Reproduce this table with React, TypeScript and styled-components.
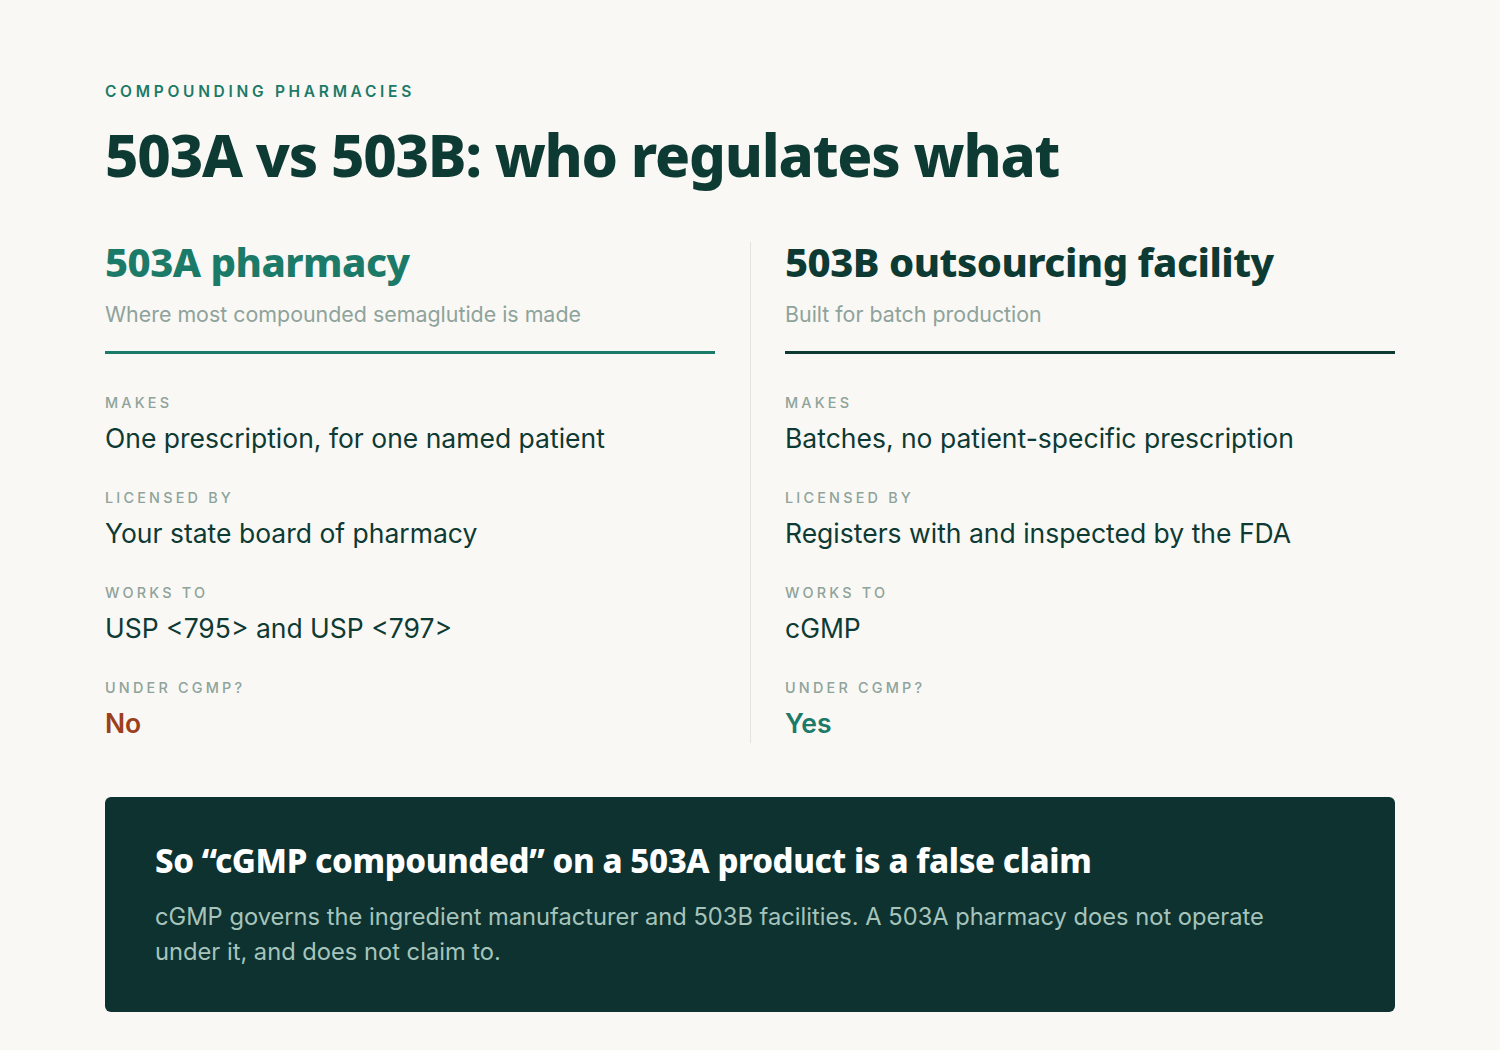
import React from 'react'
import styled, { createGlobalStyle } from 'styled-components'

const GlobalStyle = createGlobalStyle`
  html, body {
    margin: 0;
    padding: 0;
    background: #f9f8f4;
  }
  body {
    font-family: Inter, 'Noto Sans', sans-serif;
    color: #0e3a34;
  }
`

const Page = styled.main`
  padding: 82px 105px 38px;
`

const Eyebrow = styled.div`
  font-size: 15.5px;
  font-weight: 600;
  letter-spacing: 3.7px;
  color: #1c7a68;
  line-height: 20px;
`

const Title = styled.h1`
  margin: 17px 0 0;
  font-family: 'Noto Sans', sans-serif;
  font-size: 58px;
  font-weight: 800;
  letter-spacing: -1.2px;
  line-height: 72px;
  color: #0e3a34;
`

const Columns = styled.section`
  display: grid;
  grid-template-columns: 1fr 1fr;
  margin-top: 51px;
`

const Column = styled.div<{ $right?: boolean }>`
  padding: ${p => (p.$right ? '0 0 0 34px' : '0 35px 0 0')};
  border-left: ${p => (p.$right ? '1px solid #e3e3dc' : 'none')};
`

const ColTitle = styled.h2<{ $accent: string }>`
  margin: 0;
  font-family: 'Noto Sans', sans-serif;
  font-size: 40px;
  font-weight: 800;
  letter-spacing: -0.5px;
  line-height: 40px;
  color: ${p => p.$accent};
`

const Sub = styled.p`
  margin: 18px 0 0;
  font-size: 21.4px;
  line-height: 28px;
  color: #8ea39b;
`

const Rule = styled.div<{ $accent: string }>`
  height: 3px;
  margin-top: 23px;
  background: ${p => p.$accent};
`

const Rows = styled.dl`
  margin: 39px 0 0;
  display: flex;
  flex-direction: column;
  gap: 30px;
`

const Row = styled.div`
  display: flex;
  flex-direction: column;
  gap: 5px;
`

const Label = styled.dt`
  font-size: 14.4px;
  font-weight: 500;
  letter-spacing: 3.2px;
  line-height: 20px;
  color: #8ea39b;
  text-transform: uppercase;
`

const Value = styled.dd<{ $tone?: string }>`
  margin: 0;
  font-size: 26.5px;
  line-height: 40px;
  font-weight: ${p => (p.$tone ? 600 : 400)};
  color: ${p => p.$tone || '#0e3a34'};
`

const Callout = styled.aside`
  margin-top: 54px;
  background: #0d3230;
  border-radius: 6px;
  padding: 42px 50px 43px;
`

const CalloutTitle = styled.h3`
  margin: 0;
  font-family: 'Noto Sans', sans-serif;
  font-size: 33px;
  font-weight: 800;
  letter-spacing: -0.4px;
  line-height: 44px;
  color: #ffffff;
`

const CalloutText = styled.p`
  margin: 16px 0 0;
  font-size: 23.7px;
  line-height: 35px;
  color: #a6c4bb;
  max-width: 1150px;
`

type Item = { label: string; value: string; tone?: string }

const left: Item[] = [
  { label: 'Makes', value: 'One prescription, for one named patient' },
  { label: 'Licensed by', value: 'Your state board of pharmacy' },
  { label: 'Works to', value: 'USP <795> and USP <797>' },
  { label: 'Under cGMP?', value: 'No', tone: '#9c3f1c' },
]

const right: Item[] = [
  { label: 'Makes', value: 'Batches, no patient-specific prescription' },
  { label: 'Licensed by', value: 'Registers with and inspected by the FDA' },
  { label: 'Works to', value: 'cGMP' },
  { label: 'Under cGMP?', value: 'Yes', tone: '#1c7a68' },
]

const Facts = ({ items }: { items: Item[] }) => (
  <Rows>
    {items.map(item => (
      <Row key={item.label}>
        <Label>{item.label}</Label>
        <Value $tone={item.tone}>{item.value}</Value>
      </Row>
    ))}
  </Rows>
)

export default function App() {
  return (
    <>
      <GlobalStyle />
      <Page>
        <Eyebrow>COMPOUNDING PHARMACIES</Eyebrow>
        <Title>503A vs 503B: who regulates what</Title>
        <Columns>
          <Column>
            <ColTitle $accent="#1c7a68">503A pharmacy</ColTitle>
            <Sub>Where most compounded semaglutide is made</Sub>
            <Rule $accent="#1c7a68" />
            <Facts items={left} />
          </Column>
          <Column $right>
            <ColTitle $accent="#0e3a34">503B outsourcing facility</ColTitle>
            <Sub>Built for batch production</Sub>
            <Rule $accent="#0e3a34" />
            <Facts items={right} />
          </Column>
        </Columns>
        <Callout>
          <CalloutTitle>So “cGMP compounded” on a 503A product is a false claim</CalloutTitle>
          <CalloutText>
            cGMP governs the ingredient manufacturer and 503B facilities. A 503A pharmacy does not operate
            under it, and does not claim to.
          </CalloutText>
        </Callout>
      </Page>
    </>
  )
}
